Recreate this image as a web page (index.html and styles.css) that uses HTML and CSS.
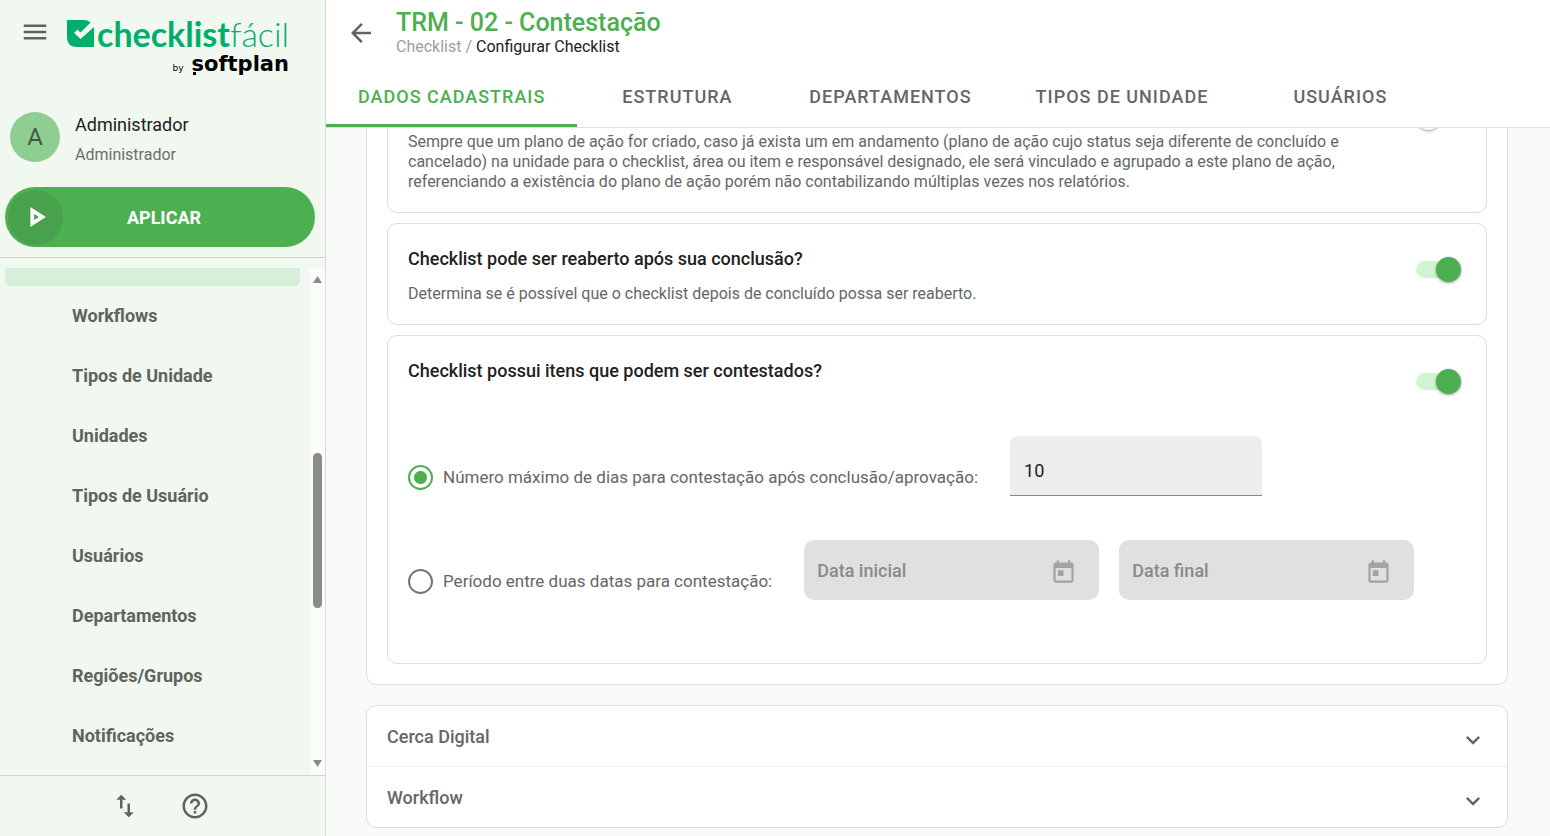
FILE: index.html
```html
<!DOCTYPE html>
<html lang="pt-BR">
<head>
<meta charset="UTF-8">
<meta name="viewport" content="width=device-width, initial-scale=1.0">
<title>Configurar Checklist</title>
<link rel="stylesheet" href="styles.css">
</head>
<body>
<aside class="sidebar">
  <div class="brand">
    <button class="icon-btn" type="button" aria-label="Menu">
      <svg class="icon" viewBox="0 0 24 24"><path d="M3 18h18v-2H3v2zm0-5h18v-2H3v2zm0-7v2h18V6H3z"/></svg>
    </button>
    <a class="logo" href="#">
      <span class="logo-main">
        <svg class="logo-mark" viewBox="0 0 28 28">
          <path fill="#00ae6b" d="M0 1h16c4 0 6 1 7.500 2.500L13.500 13.500 10.500 10.500 7 14l6.500 6L27 8v20H10C3 28 0 24 0 18z"/>
        </svg>
        <b>checklist</b><span class="logo-thin">fácil</span>
      </span>
      <span class="logo-sub"><small>by</small> <b>softplan</b></span>
    </a>
  </div>

  <div class="user">
    <div class="avatar">A</div>
    <div class="user-text">
      <div class="user-name">Administrador</div>
      <div class="user-role">Administrador</div>
    </div>
  </div>

  <button class="apply" type="button">
    <span class="apply-icon">
      <svg class="icon" viewBox="0 0 24 24"><path d="M8 5v14l11-7L8 5zm2 3.640L15.270 12 10 15.360V8.640z"/></svg>
    </span>
    <span class="apply-text">APLICAR</span>
  </button>

  <div class="nav-wrap">
    <nav class="nav">
      <div class="nav-active"></div>
      <a href="#">Workflows</a>
      <a href="#">Tipos de Unidade</a>
      <a href="#">Unidades</a>
      <a href="#">Tipos de Usuário</a>
      <a href="#">Usuários</a>
      <a href="#">Departamentos</a>
      <a href="#">Regiões/Grupos</a>
      <a href="#">Notificações</a>
    </nav>
    <div class="scrollbar">
      <svg class="arrow" viewBox="0 0 9 7"><path d="M4.500 0L9 7H0z"/></svg>
      <div class="thumb"></div>
      <svg class="arrow" viewBox="0 0 9 7"><path d="M0 0h9L4.500 7z"/></svg>
    </div>
  </div>

  <div class="sidebar-footer">
    <button class="icon-btn" type="button" aria-label="Sincronizar">
      <svg class="icon" viewBox="0 0 24 24"><path d="M9 3L5 6.990h3V14h2V6.990h3L9 3zM16 17.010V10h-2v7.010h-3L15 21l4-3.990h-3z"/></svg>
    </button>
    <button class="icon-btn" type="button" aria-label="Ajuda">
      <svg class="icon" viewBox="0 0 24 24"><path d="M11 18h2v-2h-2v2zm1-16C6.480 2 2 6.480 2 12s4.480 10 10 10 10-4.480 10-10S17.520 2 12 2zm0 18c-4.410 0-8-3.590-8-8s3.590-8 8-8 8 3.590 8 8-3.590 8-8 8zm0-14c-2.210 0-4 1.790-4 4h2c0-1.100.9-2 2-2s2 .9 2 2c0 2-3 1.750-3 5h2c0-2.250 3-2.500 3-5 0-2.210-1.790-4-4-4z"/></svg>
    </button>
  </div>
</aside>

<main class="main">
  <header class="header">
    <div class="heading">
      <button class="icon-btn" type="button" aria-label="Voltar">
        <svg class="icon" viewBox="0 0 24 24"><path d="M20 11H7.830l5.590-5.590L12 4l-8 8 8 8 1.410-1.410L7.830 13H20v-2z"/></svg>
      </button>
      <div>
        <h1>TRM - 02 - Contestação</h1>
        <div class="breadcrumb"><a href="#">Checklist</a> / <span>Configurar Checklist</span></div>
      </div>
    </div>
    <div class="tabs" role="tablist">
      <button class="tab active" type="button" role="tab">DADOS CADASTRAIS</button>
      <button class="tab" type="button" role="tab">ESTRUTURA</button>
      <button class="tab" type="button" role="tab">DEPARTAMENTOS</button>
      <button class="tab" type="button" role="tab">TIPOS DE UNIDADE</button>
      <button class="tab" type="button" role="tab">USUÁRIOS</button>
    </div>
  </header>

  <div class="content">
    <section class="panel panel-open">
      <!-- scrolled under the header -->
      <div class="card card-scrolled">
        <p>Sempre que um plano de ação for criado, caso já exista um em andamento (plano de ação cujo status seja diferente de concluído e cancelado) na unidade para o checklist, área ou item e responsável designado, ele será vinculado e agrupado a este plano de ação, referenciando a existência do plano de ação porém não contabilizando múltiplas vezes nos relatórios.</p>
        <input class="switch" type="checkbox" aria-label="Agrupar planos de ação">
      </div>

      <div class="card">
        <div>
          <h2><label for="reopen">Checklist pode ser reaberto após sua conclusão?</label></h2>
          <p>Determina se é possível que o checklist depois de concluído possa ser reaberto.</p>
        </div>
        <input class="switch" type="checkbox" id="reopen" checked>
      </div>

      <div class="card card-contest">
        <div class="contest">
          <h2><label for="contest">Checklist possui itens que podem ser contestados?</label></h2>
          <div class="option">
            <label class="radio"><input type="radio" name="period" checked>Número máximo de dias para contestação após conclusão/aprovação:</label>
            <input class="days" type="text" value="10" aria-label="Número máximo de dias">
          </div>
          <div class="option">
            <label class="radio"><input type="radio" name="period">Período entre duas datas para contestação:</label>
            <div class="date">
              <input type="text" placeholder="Data inicial" aria-label="Data inicial" disabled>
              <svg class="date-icon" viewBox="0 0 24 24"><path d="M19 3h-1V1h-2v2H8V1H6v2H5c-1.110 0-1.990.9-1.990 2L3 19c0 1.100.89 2 2 2h14c1.100 0 2-.9 2-2V5c0-1.100-.9-2-2-2zm0 16H5V8h14v11zM7 10h5v5H7z"/></svg>
            </div>
            <div class="date">
              <input type="text" placeholder="Data final" aria-label="Data final" disabled>
              <svg class="date-icon" viewBox="0 0 24 24"><path d="M19 3h-1V1h-2v2H8V1H6v2H5c-1.110 0-1.990.9-1.990 2L3 19c0 1.100.89 2 2 2h14c1.100 0 2-.9 2-2V5c0-1.100-.9-2-2-2zm0 16H5V8h14v11zM7 10h5v5H7z"/></svg>
            </div>
          </div>
        </div>
        <input class="switch" type="checkbox" id="contest" checked>
      </div>
    </section>

    <section class="panel">
      <button class="row" type="button">Cerca Digital
        <svg class="chevron" viewBox="0 0 24 24"><path d="M7.410 8.590L12 13.170l4.590-4.580L18 10l-6 6-6-6z"/></svg>
      </button>
      <button class="row" type="button">Workflow
        <svg class="chevron" viewBox="0 0 24 24"><path d="M7.410 8.590L12 13.170l4.590-4.580L18 10l-6 6-6-6z"/></svg>
      </button>
    </section>
  </div>
</main>
</body>
</html>
```
FILE: styles.css
```css
* {box-sizing: border-box;}
body {
  margin: 0;
  display: flex;
  height: 100vh;
  overflow: hidden;
  font-family: Roboto, Arial, sans-serif;
  font-size: 18px;
  color: #666;
  background: #fafafa;
}
h1, h2, p {margin: 0;}
a {color: inherit; text-decoration: none;}
button {font: inherit; color: inherit; background: none; border: none; padding: 0; cursor: pointer;}
input {font: inherit; margin: 0;}

.icon {width: 30px; height: 30px; fill: #616161; display: block;}
.icon-btn {display: flex; align-items: center; justify-content: center; width: 40px; height: 40px;}

/* sidebar */
.sidebar {
  flex: none;
  width: 326px;
  display: flex;
  flex-direction: column;
  background: #f1f8f0;
  border-right: 1px solid #d5dbd5;
}
.brand {display: flex; align-items: flex-start; padding: 12px 15px; height: 107px;}
.logo {margin-left: 12px; color: #00ae6b;}
.logo-main {display: flex; align-items: center; height: 42px; font-family: Lato, sans-serif; font-size: 34px;}
.logo-mark {width: 28px; height: 28px; margin-right: 2px;}
.logo-thin {font-weight: 300;}
.logo-sub {display: flex; justify-content: flex-end; align-items: baseline; gap: 8px; color: #000; font-family: "DejaVu Sans", sans-serif; font-size: 21px; line-height: 20px;}
.logo-sub small {font-size: 9px;}
.logo-sub b {position: relative;}
.logo-sub b::before {content: ""; position: absolute; left: 1px; bottom: -1px; width: 3px; height: 3px; background: #000;}

.user {display: flex; align-items: center; gap: 15px; height: 60px; padding: 0 10px;}
.avatar {width: 50px; height: 50px; border-radius: 50%; background: #8fce92; color: #3f5a41; font-size: 24px; line-height: 50px; text-align: center;}
.user-text {padding-top: 6px;}
.user-name {color: #212121; line-height: 30px;}
.user-role {font-size: 16px; line-height: 30px; color: #6b706b;}

.apply {
  display: flex;
  align-items: center;
  height: 60px;
  margin: 20px 10px 10px 5px;
  border-radius: 30px;
  background: #4caf50;
  color: #fff;
  font-weight: 700;
}
.apply-icon {display: flex; align-items: center; justify-content: center; width: 55px; height: 55px; margin-left: 3px; border-radius: 50%; background: #48a14c;}
.apply-icon .icon {fill: #fff; stroke: #fff;}
.apply-text {flex: 1; padding-right: 50px; text-align: center;}

.nav-wrap {flex: 1; display: flex; min-height: 0; border-top: 1px solid #cfd8cf; padding-top: 10px;}
.nav {flex: 1; overflow: hidden; padding: 0 10px 0 5px;}
.nav-active {height: 18px; background: #d7eed8; border-radius: 0 0 5px 5px;}
.nav a {display: block; padding-left: 67px; line-height: 60px; font-weight: 700; color: #5f645f;}
.scrollbar {width: 15px; padding: 8px 0; background: #fcfcfc; display: flex; flex-direction: column; align-items: center; justify-content: space-between;}
.arrow {width: 9px; height: 7px; fill: #8b8b8b;}
.thumb {width: 9px; height: 155px; margin-top: 18px; border-radius: 5px; background: #8b8b8b;}

.sidebar-footer {flex: none; display: flex; justify-content: center; align-items: center; gap: 30px; height: 61px; padding-right: 5px; border-top: 1px solid #cfd8cf;}

/* header */
.main {flex: 1; min-width: 0; display: flex; flex-direction: column;}
.header {flex: none; background: #fff; border-bottom: 1px solid #e0e0e0; z-index: 1;}
.heading {display: flex; align-items: center; gap: 15px; height: 65px; padding-left: 15px;}
h1 {font-size: 25px; line-height: 28px; font-weight: 500; color: #4caf50;}
.breadcrumb {font-size: 16px; line-height: 20px; color: #9e9e9e;}
.breadcrumb span {color: #212121;}
.tabs {display: flex;}
.tab {min-width: 200px; height: 62px; padding: 4px 32px 0; border-bottom: 3px solid transparent; font-weight: 500; letter-spacing: 1px;}
.tab.active {color: #4caf50; border-color: #4caf50;}

/* content */
.content {flex: 1; min-height: 0; overflow: hidden; padding: 0 42px 0 40px;}
.panel {margin-bottom: 20px; border: 1px solid #ddd; border-radius: 10px; background: #fff;}
.panel-open {display: flex; flex-direction: column; gap: 10px; margin-top: -78px; padding: 20px;}
.card {display: flex; justify-content: space-between; align-items: flex-start; min-height: 102px; padding: 20px; border: 1px solid #ddd; border-radius: 10px;}
.card-scrolled {padding-top: 60px;}
.card-scrolled p {max-width: 945px;}
.card-scrolled .switch {margin-top: -27px;}
h2 {font-size: 18px; line-height: 30px; font-weight: 500; color: #212121;}
.card p {font-size: 16px; line-height: 20px;}
.card h2 + p {margin-top: 10px;}

.switch {
  flex: none;
  appearance: none;
  display: flex;
  align-items: center;
  width: 45px;
  height: 25px;
  margin: 13px 5px 0;
  background: linear-gradient(#e0e0e0, #e0e0e0) center / 37px 17px no-repeat;
}
.switch::before {content: ""; width: 25px; height: 25px; border-radius: 50%; background: #fff; box-shadow: 0 1px 3px rgba(0, 0, 0, 0.4);}
.switch:checked {justify-content: flex-end; background: none;}
.switch:checked::before {background: #4caf50;}
.switch:checked::after {content: ""; order: -1; width: 28px; height: 17px; margin-right: -8px; border-radius: 9px 0 0 9px; background: #d0f5d3;}

.card-contest {padding-bottom: 63px;}
.contest {flex: 1; display: flex; flex-direction: column; gap: 44px; min-width: 0; margin-right: -50px;}
.contest h2 {margin-bottom: 6px;}
.option {display: flex; align-items: center; gap: 20px;}
.radio {display: flex; align-items: center; gap: 10px; padding: 23px 12px 0 0; font-size: 17px; line-height: 25px;}
.radio input {appearance: none; flex: none; width: 25px; height: 25px; border: 2px solid #757575; border-radius: 50%;}
.radio input:checked {border-color: #4caf50; background: radial-gradient(circle, #4caf50 6px, transparent 7px);}
.days {width: 252px; height: 60px; padding: 10px 14px 0; border: none; border-bottom: 1px solid #888; border-radius: 8px 8px 0 0; background: #ededed; color: #212121;}
.date {display: flex; align-items: center; width: 295px; height: 60px; padding: 0 22px 0 13px; border-radius: 10px; background: #e0e0e0;}
.date input {flex: 1; min-width: 0; padding: 0; border: none; background: none; font-weight: 500;}
.date input::placeholder {color: #8a8a8a;}
.date-icon {width: 27px; height: 27px; margin-top: 5px; fill: #a3a3a3;}

.row {display: flex; justify-content: space-between; align-items: center; width: 100%; height: 60px; padding: 0 20px; font-weight: 500;}
.row + .row {height: 61px; border-top: 1px solid #eee;}
.chevron {width: 28px; height: 28px; margin-top: 8px; fill: #666;}
```
